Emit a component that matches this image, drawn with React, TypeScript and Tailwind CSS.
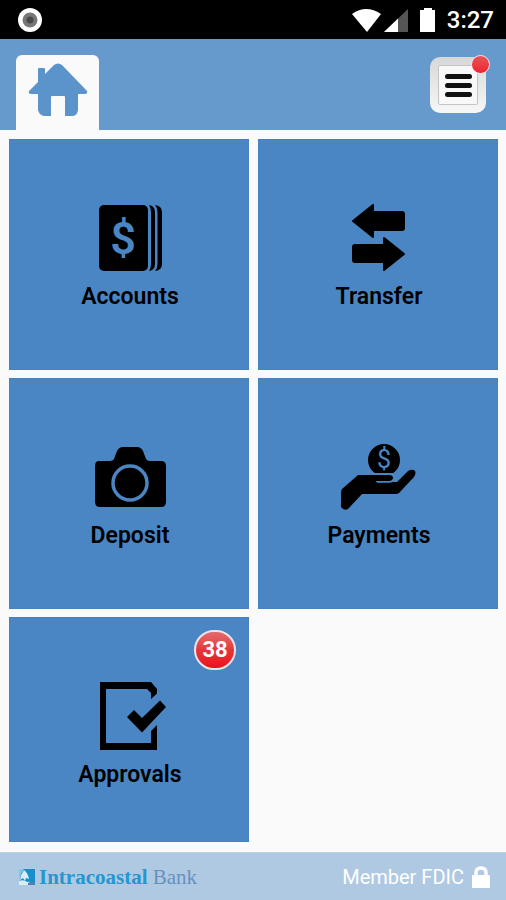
import type { ReactNode } from "react";

const AccountsIcon = () => (
  <svg viewBox="0 0 80 68" className="w-20 h-17 overflow-visible" aria-hidden="true">
    <rect x="10" y="1" width="49" height="66" rx="5" />
    <path d="M60 1 Q66 2 66 8 V60 Q66 66 60 67 Q62 64 62 60 V8 Q62 4 60 1 Z" />
    <path d="M66 1 Q73 2 73 8 V60 Q73 66 66 67 Q68.500 64 68.500 60 V8 Q68.500 4 66 1 Z" />
    <text x="34" y="50" textAnchor="middle" fontSize="45" fontWeight="600" fontFamily="Roboto, sans-serif" fill="#4a86c4">$</text>
  </svg>
);

const TransferIcon = () => (
  <svg viewBox="0 0 80 68" className="w-20 h-17" aria-hidden="true">
    <path
      d="M15 17 L35 1 V8 H64 Q66 8 66 10 V24 Q66 26 64 26 H35 V33 Z M66 50 L46 34 V41 H17 Q15 41 15 43 V56 Q15 58 17 58 H46 V66 Z"
      stroke="#000"
      strokeWidth="2"
      strokeLinejoin="round"
    />
  </svg>
);

const CameraIcon = () => (
  <svg viewBox="0 0 80 68" className="w-20 h-17" aria-hidden="true">
    <path d="M10 18 H21 Q24 18 25 16 L28 8 Q30 4 34 4 H48 Q52 4 54 8 L57 16 Q58 18 61 18 H72 Q77 18 77 23 V59 Q77 64 72 64 H11 Q6 64 6 59 V23 Q6 18 10 18 Z" />
    <circle cx="41" cy="40" r="17" fill="none" stroke="#4a86c4" strokeWidth="3.500" />
  </svg>
);

const PaymentsIcon = () => (
  <svg viewBox="0 0 80 68" className="w-20 h-17 overflow-visible" aria-hidden="true">
    <circle cx="46" cy="17" r="16" />
    <text x="46" y="25" textAnchor="middle" fontSize="25" fontWeight="400" fontFamily="Roboto, sans-serif" fill="#4a86c4">$</text>
    <path d="M36 31 H56" stroke="#4a86c4" strokeWidth="2" />
    <path d="M20 32 L4 46 Q3 48 3 50 V64 Q6 68 10 66 L24 51 H58 Q60 51 61 50 L76 34 Q79 29 76 27 Q73 26 70 28 L59 39 H38 V38 H51 Q55 38 55 35 Q55 32 51 32 Z" />
    <path d="M39 39 H51 Q56 39 56 34" fill="none" stroke="#4a86c4" strokeWidth="1.500" />
  </svg>
);

const ApprovalsIcon = () => (
  <svg viewBox="0 0 80 68" className="w-20 h-17" aria-hidden="true">
    <path d="M11 0 H62 L68 7 V11.500 L62 17 V11 L58 7 H17 V61 H62 V49 L68 43 V68 H11 Z" />
    <path d="M38 35 L45 28 L53 36 L71 18.500 L77 25 L53 50.500 Z" />
  </svg>
);

type TileProps = {
  label: string;
  icon: ReactNode;
  badge?: number;
  height?: string;
};

const Tile = ({ label, icon, badge, height = "min-h-[231px]" }: TileProps) => (
  <button
    type="button"
    className={`relative flex flex-col items-center pt-16 bg-[#4a86c4] border border-[#4683be] text-black cursor-pointer ${height}`}
  >
    {icon}
    <span className="mt-[13px] pl-0.5 text-[23px] leading-6 font-semibold">{label}</span>
    {badge !== undefined && (
      <span className="absolute top-3 right-3 flex h-10 w-[42px] items-center justify-center rounded-full border-2 border-[#efe4ea] bg-linear-to-b from-[#e2696f] via-[#e5343b] to-[#ea0f18] text-[22px] leading-6 font-bold text-white">
        {badge}
      </span>
    )}
  </button>
);

const StatusBar = () => (
  <div className="flex h-[39px] items-center justify-between bg-black pl-[18px] pr-3 text-white">
    <svg viewBox="0 0 24 24" className="size-6" aria-hidden="true">
      <circle cx="12" cy="12" r="12" fill="#fff" />
      <circle cx="12" cy="12" r="7.500" fill="#777" />
      <circle cx="12" cy="12" r="3.500" fill="#484848" />
    </svg>
    <div className="flex items-center">
      <svg viewBox="0 0 86 24" className="h-6 w-[86px]" aria-hidden="true">
        <path d="M3 6 Q17 -4 32 6 L18 24 Z" fill="#fff" />
        <path d="M59 1 V24 H35 Z" fill="#555" />
        <path d="M49 10.500 V24 H35 Z" fill="#fff" />
        <path d="M75 0 H83 V2 H86 V24 H71 V2 H75 Z" fill="#fff" />
      </svg>
      <span className="ml-3 text-2xl leading-6 font-medium">3:27</span>
    </div>
  </div>
);

const Header = () => (
  <header className="flex h-[91px] items-end justify-between bg-[#6699cc] pl-4 pr-5">
    <a
      href="#home"
      aria-label="Home"
      className="flex h-[75px] w-[83px] justify-center rounded-t-md bg-[#fafafa] pt-2"
    >
      <svg viewBox="0 0 60 54" className="h-[54px] w-15" aria-hidden="true">
        <path
          d="M26 2 Q30 -1 34 2 L59 28 Q60 31 57 31 H50 V47 Q49 53 44 53 H37 V34 Q37 33 36 33 H24 Q23 33 23 34 V53 H16 Q11 52 10 47 V31 H3 Q0 31 1 28 L10 19 V6 Q10 5 11 5 H16 Q17 5 17 6 V11 Z"
          fill="#5b93cb"
        />
      </svg>
    </a>
    <button
      type="button"
      aria-label="Menu"
      className="relative mb-[17px] flex size-[56px] items-center justify-center rounded-[10px] bg-linear-to-b from-[#d6d8d8] to-[#f7f7f7] cursor-pointer"
    >
      <span className="flex size-10 flex-col items-center justify-center gap-1 rounded-xs border border-[#c5c5c5] bg-[#f8f8f8]">
        <span className="h-[5px] w-[27px] rounded-full bg-[#101010]" />
        <span className="h-[5px] w-[27px] rounded-full bg-[#101010]" />
        <span className="h-[5px] w-[27px] rounded-full bg-[#101010]" />
      </span>
      <span className="absolute -top-0.5 -right-1 size-[19px] rounded-full border border-[#f3e4e8] bg-linear-to-b from-[#e95058] to-[#ef202d]" />
    </button>
  </header>
);

const Footer = () => (
  <footer className="flex h-12 items-center justify-between border-t border-[#bdd0df] bg-[#b0c9e2] pl-[19px] pr-4">
    <div className="flex items-center gap-1">
      <svg viewBox="0 0 16 16" className="size-4" aria-hidden="true">
        <rect width="16" height="16" fill="#1590cd" />
        <path d="M0 0 H5 L2 5 L1 12 L0 14 Z" fill="#86c5e3" />
        <path d="M5 1 Q9 4 10 10 L7 9 L6 12 L4 9 L1 11 Q2 5 5 1 Z" fill="#d9edf7" />
        <path d="M0 12 Q5 10 8 13 Q12 12 14 16 H0 Z" fill="#d9edf7" />
        <path d="M9 14 Q12 12 16 14 V16 H9 Z" fill="#4f80ad" />
      </svg>
      <p className="font-['Liberation_Serif',serif] text-[21px] leading-6 text-[#6591bf]">
        <span className="font-bold text-[#2497d0]">Intracoastal</span> Bank
      </p>
    </div>
    <div className="flex items-center gap-2 text-white">
      <span className="text-xl leading-6">Member FDIC</span>
      <svg viewBox="0 0 18 22" className="h-[22px] w-[18px]" aria-hidden="true">
        <rect y="9" width="18" height="13" rx="1" fill="#fff" />
        <path d="M4 10 V7 Q4 2 9 2 Q14 2 14 7 V10" fill="none" stroke="#fff" strokeWidth="3.500" />
      </svg>
    </div>
  </footer>
);

const App = () => {
  return (
    <div className="flex min-h-screen flex-col bg-[#fafafa] font-[Roboto,sans-serif]">
      <StatusBar />
      <Header />
      <main className="grid flex-1 grid-cols-2 content-start gap-x-[9px] gap-y-2 pt-[9px] pr-2 pb-2 pl-[9px]">
        <Tile label="Accounts" icon={<AccountsIcon />} />
        <Tile label="Transfer" icon={<TransferIcon />} />
        <Tile label="Deposit" icon={<CameraIcon />} />
        <Tile label="Payments" icon={<PaymentsIcon />} />
        <Tile label="Approvals" icon={<ApprovalsIcon />} badge={38} height="min-h-[225px]" />
      </main>
      <Footer />
    </div>
  );
};

export default App;
